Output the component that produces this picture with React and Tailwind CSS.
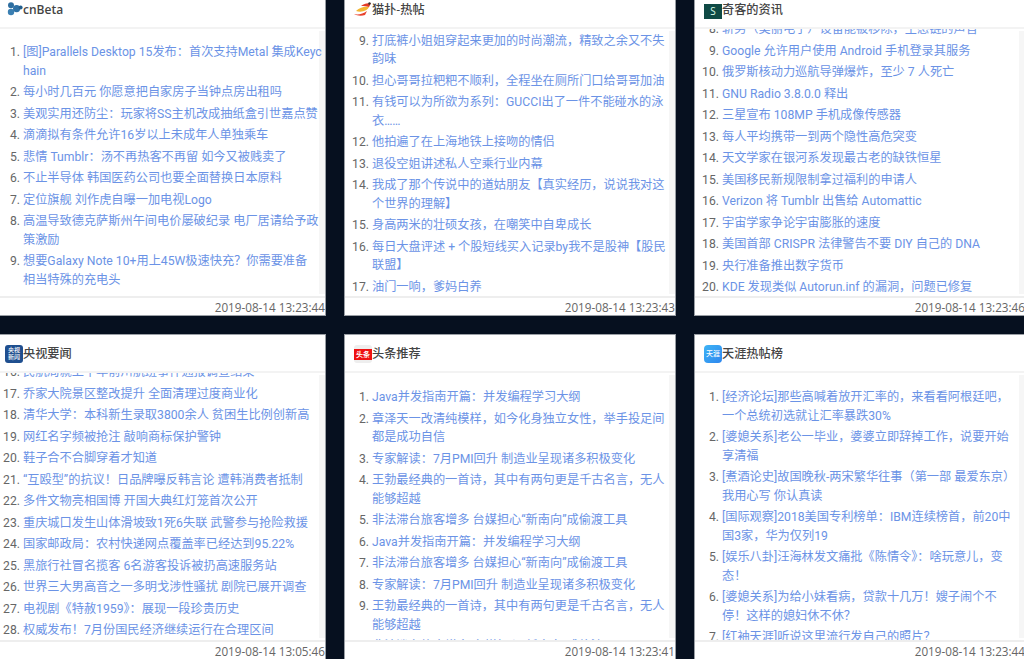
const Cnbeta = () => (
  <svg width="18" height="18" viewBox="0 0 18 18" className="shrink-0 -mt-[2px]">
    <circle cx="6" cy="5.2" r="3" fill="#2d6ea0" />
    <circle cx="6" cy="12" r="3.2" fill="#3a7fb2" />
    <circle cx="11.6" cy="8.6" r="3.6" fill="#2f72a6" />
    <circle cx="15.6" cy="7.4" r="2" fill="#235f8e" />
  </svg>
);

const Maopu = () => (
  <svg width="18" height="18" viewBox="0 0 18 18" className="shrink-0 -mt-[2px]">
    <path d="M2 11c3-3 8-5 13-4-1 3-7 6-13 4z" fill="#f2b632" />
    <path d="M0 14c4 1 9 0 13-3l-2 4c-3 1-8 1-11-1z" fill="#e8412c" />
    <path d="M7 6c2-2 6-3 10-3-1 1-1 3-2 4-3-1-5-1-8-1z" fill="#e23a26" />
    <circle cx="15.5" cy="3.5" r="1.2" fill="#333" />
  </svg>
);

const Logo = ({ kind }) => {
  if (kind === 'cnbeta') return <Cnbeta />;
  if (kind === 'maopu') return <Maopu />;
  if (kind === 'geek') {
    return <div className="w-[18px] h-[15px] mt-[2px] shrink-0 bg-[#0f4a45] text-[#dfe] text-[10px] flex items-center justify-center">S</div>;
  }
  if (kind === 'cctv') {
    return (
      <div className="w-[18px] h-[18px] shrink-0 rounded-[3px] bg-[#1f4f8f] text-white text-[6px] leading-[7px] flex items-center justify-center text-center">
        央视<br />新闻
      </div>
    );
  }
  if (kind === 'toutiao') {
    return (
      <div className="w-[18px] h-[18px] shrink-0 rounded-[3px] bg-[#eeeeee] flex items-center">
        <div className="w-full h-[11px] bg-[#ee1111] text-white text-[7px] leading-[11px] text-center font-bold">头条</div>
      </div>
    );
  }
  return (
    <div className="w-[18px] h-[18px] shrink-0 rounded-[4px] bg-gradient-to-br from-[#3fb4f5] to-[#2f86ee] text-white text-[7px] leading-[18px] text-center">
      天涯
    </div>
  );
};

const Card = ({ logo, title, time, start, items, top }) => (
  <div className="bg-white border border-[#9a9fa5] flex flex-col h-[326px] overflow-hidden">
    <div className="h-[38px] shrink-0 border-b-2 border-[#f3f3f3] flex items-center pl-[9px] pt-[2px] text-[12.2px] text-[#444] font-medium">
      <Logo kind={logo} />
      <span className={logo === 'cnbeta' ? 'font-semibold text-[12px]' : ''}>{title}</span>
    </div>
    <div className="relative flex-1 min-h-0 overflow-hidden">
      {/* scrollbar track */}
      <div className="absolute right-0 top-[2px] bottom-[2px] w-[6px] bg-[#f6f6f6]" />
      <ol start={start} className={`relative list-decimal pl-[27px] pr-[6px] text-[12.2px] leading-[18.5px] text-[#666] font-['Roboto','Noto_Sans_CJK_SC',sans-serif] ${top}`}>
        {items.map((text, i) => (
          <li key={i} className="mb-[3px] break-all whitespace-pre-line">
            <a className="text-[#6b93e6]">{text}</a>
          </li>
        ))}
      </ol>
    </div>
    <div className="h-[19px] shrink-0 border-t-2 border-[#eeeeee] text-right text-[11.7px] leading-[19px] text-[#666]">
      {time}
    </div>
  </div>
);

const cards = [
  {
    logo: 'cnbeta', title: 'cnBeta', time: '2019-08-14 13:23:44', start: 1, top: 'mt-[14px] [&>li:first-child]:-mr-[4px]',
    items: [
      '[图]Parallels Desktop 15发布：首次支持Metal 集成Keychain',
      '每小时几百元 你愿意把自家房子当钟点房出租吗',
      '美观实用还防尘：玩家将SS主机改成抽纸盒引世嘉点赞',
      '滴滴拟有条件允许16岁以上未成年人单独乘车',
      '悲情 Tumblr：汤不再热客不再留 如今又被贱卖了',
      '不止半导体 韩国医药公司也要全面替换日本原料',
      '定位旗舰 刘作虎自曝一加电视Logo',
      '高温导致德克萨斯州午间电价屡破纪录 电厂居请给予政策激励',
      '想要Galaxy Note 10+用上45W极速快充？你需要准备相当特殊的充电头',
    ],
  },
  {
    logo: 'maopu', title: '猫扑-热帖', time: '2019-08-14 13:23:43', start: 9, top: 'mt-[2.5px]',
    items: [
      '打底裤小姐姐穿起来更加的时尚潮流，精致之余又不失韵味',
      '担心哥哥拉粑粑不顺利，全程坐在厕所门口给哥哥加油',
      '有钱可以为所欲为系列：GUCCI出了一件不能碰水的泳衣……',
      '他拍遍了在上海地铁上接吻的情侣',
      '退役空姐讲述私人空乘行业内幕',
      '我成了那个传说中的道姑朋友【真实经历，说说我对这个世界的理解】',
      '身高两米的壮硕女孩，在嘲笑中自卑成长',
      '每日大盘评述 + 个股短线买入记录by我不是股神【股民联盟】',
      '油门一响，爹妈白养',
    ],
  },
  {
    logo: 'geek', title: '奇客的资讯', time: '2019-08-14 13:23:46', start: 8, top: '-mt-[9px]',
    items: [
      '斩男（美丽电子）设备能被移除，生态链的声音',
      'Google 允许用户使用 Android 手机登录其服务',
      '俄罗斯核动力巡航导弹爆炸，至少 7 人死亡',
      'GNU Radio 3.8.0.0 释出',
      '三星宣布 108MP 手机成像传感器',
      '每人平均携带一到两个隐性高危突变',
      '天文学家在银河系发现最古老的缺铁恒星',
      '美国移民新规限制拿过福利的申请人',
      'Verizon 将 Tumblr 出售给 Automattic',
      '宇宙学家争论宇宙膨胀的速度',
      '美国首部 CRISPR 法律警告不要 DIY 自己的 DNA',
      '央行准备推出数字货币',
      'KDE 发现类似 Autorun.inf 的漏洞，问题已修复',
    ],
  },
  {
    logo: 'cctv', title: '央视要闻', time: '2019-08-14 13:05:46', start: 16, top: '-mt-[10px]',
    items: [
      '民航局就上半年前川航班事件通报调查结果',
      '乔家大院景区整改提升 全面清理过度商业化',
      '清华大学：本科新生录取3800余人 贫困生比例创新高',
      '网红名字频被抢注 敲响商标保护警钟',
      '鞋子合不合脚穿着才知道',
      '“互殴型”的抗议！日品牌曝反韩言论 遭韩消费者抵制',
      '多件文物亮相国博 开国大典红灯笼首次公开',
      '重庆城口发生山体滑坡致1死6失联 武警参与抢险救援',
      '国家邮政局：农村快递网点覆盖率已经达到95.22%',
      '黑旅行社冒名揽客 6名游客投诉被扔高速服务站',
      '世界三大男高音之一多明戈涉性骚扰 剧院已展开调查',
      '电视剧《特赦1959》：展现一段珍贵历史',
      '权威发布！7月份国民经济继续运行在合理区间',
    ],
  },
  {
    logo: 'toutiao', title: '头条推荐', time: '2019-08-14 13:23:41', start: 1, top: 'mt-[15px] [&>li:last-child]:mt-[3px]',
    items: [
      'Java并发指南开篇：并发编程学习大纲',
      '章泽天一改清纯模样，如今化身独立女性，举手投足间都是成功自信',
      '专家解读：7月PMI回升 制造业呈现诸多积极变化',
      '王勃最经典的一首诗，其中有两句更是千古名言，无人能够超越',
      '非法滞台旅客增多 台媒担心“新南向”成偷渡工具',
      'Java并发指南开篇：并发编程学习大纲',
      '非法滞台旅客增多 台媒担心“新南向”成偷渡工具',
      '专家解读：7月PMI回升 制造业呈现诸多积极变化',
      '王勃最经典的一首诗，其中有两句更是千古名言，无人能够超越',
      '非法滞台旅客增多 台媒担心“新南向”成偷渡工具',
    ],
  },
  {
    logo: 'tianya', title: '天涯热帖榜', time: '2019-08-14 13:23:44', start: 1, top: 'mt-[15px]',
    items: [
      '[经济论坛]那些高喊着放开汇率的，来看看阿根廷吧，一个总统初选就让汇率暴跌30%',
      '[婆媳关系]老公一毕业，婆婆立即辞掉工作，说要开始享清福',
      '[煮酒论史]故国晚秋-两宋繁华往事（第一部 最爱东京）我用心写 你认真读',
      '[国际观察]2018美国专利榜单：IBM连续榜首，前20中国3家，华为仅列19',
      '[娱乐八卦]汪海林发文痛批《陈情令》：啥玩意儿，变态！',
      '[婆媳关系]为给小妹看病，贷款十几万！嫂子闹个不\n停！这样的媳妇休不休？',
      '[红袖天涯]听说这里流行发自己的照片？',
    ],
  },
];

export default function App() {
  return (
    <div className="w-[1024px] h-[659px] overflow-hidden bg-[#06101f] font-['Open_Sans','Noto_Sans_CJK_SC',sans-serif]">
      <div className="grid grid-cols-[331px_332px_332px] gap-x-[18px] gap-y-[18px] -ml-[5px] -mt-[10px] w-[1040px]">
        {cards.map((card) => (
          <Card key={card.title} {...card} />
        ))}
      </div>
    </div>
  );
}
